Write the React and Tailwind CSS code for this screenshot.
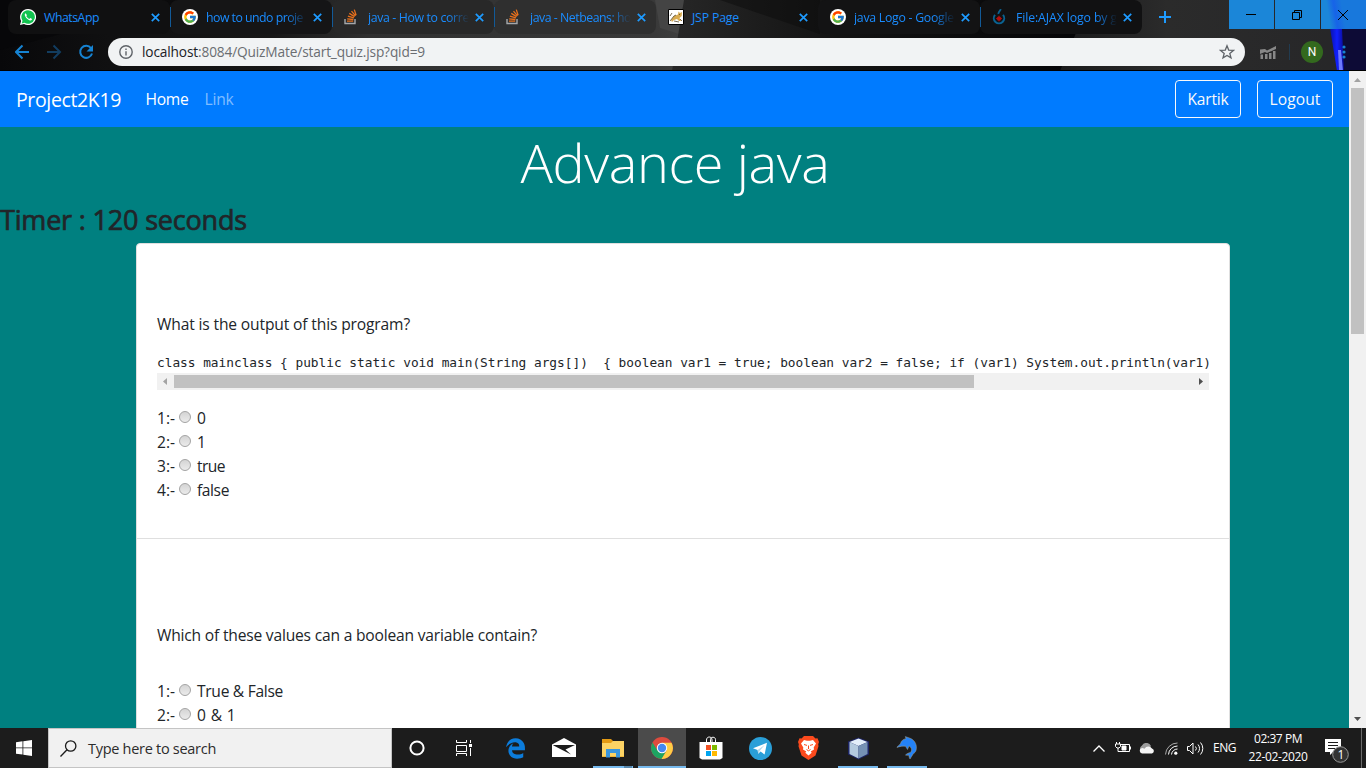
import React, { useLayoutEffect, useRef } from "react";
import { FcGoogle } from "react-icons/fc";
import { FaEdgeLegacy } from "react-icons/fa6";

/* Text run whose letter spacing is adjusted so that it spans `w` pixels. */
function Fit({ w, className = "", children }) {
  const ref = useRef(null);
  useLayoutEffect(() => {
    const el = ref.current;
    const fit = () => {
      el.style.letterSpacing = "0px";
      const n = el.textContent.length;
      el.style.letterSpacing = (w - el.getBoundingClientRect().width) / n + "px";
    };
    fit();
    document.fonts.ready.then(fit);
  }, [w]);
  return (
    <span ref={ref} className={"inline-block whitespace-pre " + className}>
      {children}
    </span>
  );
}

const Close = () => (
  <svg className="size-[9px]" viewBox="0 0 9 9" stroke="#1e9bff" strokeWidth="1.7">
    <path d="M.8.8l7.4 7.4M8.2.8L.8 8.2" />
  </svg>
);

const WhatsApp = () => (
  <svg viewBox="0 0 16 16" className="size-4">
    <path d="M8 0a8 8 0 1 1-4 14.9L0 16l1.1-4A8 8 0 0 1 8 0z" fill="#fff" />
    <path d="M8 1.2a6.8 6.8 0 1 1-3.5 12.6L1.7 14.4l.8-2.7A6.8 6.8 0 0 1 8 1.2z" fill="#12c350" />
    <path
      d="M5.6 4.2c-.9.5-1.1 1.7-.4 3 1 2 2.700 3.600 4.700 4.200 1.300.3 2-.4 2.200-1.400L10.300 9l-.9.9C8 9.400 6.900 8.300 6.300 7l.7-.8z"
      fill="#fff"
    />
  </svg>
);

const Google = () => (
  <span className="flex size-4 items-center justify-center rounded-full bg-white">
    <FcGoogle className="size-[14px]" />
  </span>
);

const Stack = () => (
  <svg viewBox="0 0 14 16" className="h-4 w-[14px]" fill="none">
    <path d="M1 10v4.500h10V10" stroke="#a5a7aa" strokeWidth="1.400" />
    <path
      d="M3 12.200h6.200M3.200 9.800l6.200.7M3.900 7.200l6 1.700M5.300 4.400l5.300 3.200M7.500 2.100l4 4.700M10.300.6l1.800 5.600"
      stroke="#e8701c"
      strokeWidth="1.300"
    />
  </svg>
);

const Tomcat = () => (
  <svg viewBox="0 0 16 16" className="size-4">
    <path d="M.5.500h15v15H.5z" fill="#fff" stroke="#000" />
    <path d="M3 11l3-4 4-1.500.500-3L12 4l2-1-.3 4-2.200 2 1.500 3h-2L9 10l-3 1-2 2z" fill="#d8ab50" />
    <path d="M2 7l2-3M2 12l4-5 2-1M6 12l5 1M12 10l2 2M11 5l1 1" stroke="#57482c" strokeWidth=".8" fill="none" />
  </svg>
);

const Commons = () => (
  <svg viewBox="0 0 14 16" className="h-4 w-[14px]" fill="none">
    <path d="M8.500 0c.5 2-2.500 2.500-2 5" stroke="#0a6291" strokeWidth="1.800" />
    <path d="M3 5.800a5.200 5.200 0 1 0 8 0" stroke="#0a6291" strokeWidth="2" />
    <circle cx="7" cy="9.600" r="2.200" fill="#b50d0d" />
    <path d="M4.200 9.600h5.600M7 6.800v5.600" stroke="#b50d0d" />
  </svg>
);

const tabs = [
  { icon: <WhatsApp />, title: "WhatsApp", w: 55, bg: "bg-[#101011]", line: true },
  { icon: <Google />, title: "how to undo proje", w: 97, bg: "bg-[#151516]", line: true, fade: true },
  { icon: <Stack />, title: "java - How to corre", w: 101, bg: "bg-[#282828]", line: true, fade: true },
  { icon: <Stack />, title: "java - Netbeans: ho", w: 101, bg: "bg-[#2f2f2f]", fade: true },
  { icon: <Tomcat />, title: "JSP Page", w: 47, bg: "" },
  { icon: <Google />, title: "java Logo - Google", w: 100, bg: "bg-[#131314]", line: true, fade: true },
  { icon: <Commons />, title: "File:AJAX logo by g", w: 101, bg: "bg-[#111112]", fade: true },
];

function Backdrop() {
  return (
    <svg className="absolute inset-0 h-[71px] w-[1366px]" viewBox="0 0 1366 71">
      <defs>
        <linearGradient id="top" x1="0" x2="1">
          <stop offset="0" stopColor="#08080a" />
          <stop offset=".08" stopColor="#101011" />
          <stop offset=".2" stopColor="#171717" />
          <stop offset=".27" stopColor="#303030" />
          <stop offset=".48" stopColor="#393939" />
          <stop offset=".5" stopColor="#3f3f3f" />
        </linearGradient>
        <linearGradient id="mid" x1="0" x2="1">
          <stop offset="0" stopColor="#272727" />
          <stop offset=".4" stopColor="#131313" />
          <stop offset="1" stopColor="#050507" />
        </linearGradient>
        <linearGradient id="right" x1="0" x2="1">
          <stop offset="0" stopColor="#1a1a1b" />
          <stop offset=".35" stopColor="#2b2b2b" />
          <stop offset="1" stopColor="#262628" />
        </linearGradient>
        <linearGradient id="glow" x1="0" x2="1">
          <stop offset="0" stopColor="#0a12a8" />
          <stop offset=".5" stopColor="#1020ff" />
          <stop offset="1" stopColor="#0a0a90" />
        </linearGradient>
      </defs>
      <path d="M0 0h1366v71H0z" fill="url(#top)" />
      <path d="M0 71V50L190 0H0z" fill="#060608" opacity=".6" />
      <path d="M655 0h30l-6 34-19-6z" fill="#444" />
      <path d="M684 0h400v71H672z" fill="url(#mid)" />
      <path d="M720 0h100v34z" fill="#0c0c0c" opacity=".5" />
      <path d="M1090 0h276v71H1060z" fill="url(#right)" />
      <path d="M1325 0h41v71h-24z" fill="#0d0b36" />
      <path d="M1330 28h12l2 43h-7z" fill="url(#glow)" />
      <path d="M1338 50l3 0 2 21h-4z" fill="#6d78ff" />
      <path d="M0 70h1366v1H0z" fill="#000" />
    </svg>
  );
}

function BrowserChrome() {
  return (
    <header className="relative h-[71px] shrink-0 overflow-hidden bg-[#101011]">
      <Backdrop />
      <div className="relative flex h-[34px]">
        <div className="flex pl-2">
          {tabs.map((t, i) => (
            <div key={i} className={"relative flex h-[34px] w-[162px] items-center rounded-lg pl-3 " + t.bg}>
              <span className="flex w-6 shrink-0 items-center">{t.icon}</span>
              <span
                className={
                  "w-[102px] pt-px text-[12.300px] leading-4 whitespace-nowrap text-[#1a8cff] " +
                  (t.fade ? "[mask-image:linear-gradient(to_right,black_78%,transparent_99%)]" : "")
                }
              >
                <Fit w={t.w}>{t.title}</Fit>
              </span>
              <span className="ml-[4.500px]">
                <Close />
              </span>
              {t.line && <span className="absolute top-[7px] -right-px z-10 h-5 w-px bg-[#125a98]" />}
            </div>
          ))}
        </div>
        <div className="flex w-[62px] items-center pl-[17px]">
          <svg className="size-3" viewBox="0 0 12 12" stroke="#1e9bff" strokeWidth="2">
            <path d="M6 0v12M0 6h12" />
          </svg>
        </div>
        <div className="ml-auto flex h-[29px] gap-px">
          <div className="flex w-[45px] items-center justify-center bg-[#1b86d8]">
            <svg className="mr-px h-2.5 w-2.5" viewBox="0 0 10 10" stroke="#000">
              <path d="M0 4.500h10" />
            </svg>
          </div>
          <div className="flex w-[45px] items-center justify-center bg-[#1b86d8]">
            <svg className="mr-px size-2.5" viewBox="0 0 10 10" stroke="#000" fill="none">
              <path d="M.5 2.500h7v7h-7zM2.500 2.500v-2h7v7h-2" />
            </svg>
          </div>
          <div className="flex w-[45px] items-center justify-center bg-[linear-gradient(80deg,#1b86d8_20%,#1763e8_34%,#1878dc_50%)]">
            <svg className="mr-px size-2.5" viewBox="0 0 10 10" stroke="#000" fill="none">
              <path d="M0 0l10 10M10 0L0 10" />
            </svg>
          </div>
        </div>
      </div>
      <div className="relative flex h-9 items-center">
        <svg className="ml-[15px] h-4 w-20 shrink-0" viewBox="0 0 80 16" fill="none" strokeWidth="2">
          <path d="M14 8H1.500M7.500 1.500L1 8l6.500 6.500" stroke="#1683d2" />
          <path d="M32 8h12.500M38.500 1.500L45 8l-6.500 6.500" stroke="#123d60" />
          <path d="M76 4.200A6 6 0 1 0 77 9.500" stroke="#1683d2" />
          <path d="M78 1v6.500h-6.500z" fill="#1683d2" />
        </svg>
        <div className="ml-[13px] flex h-7 w-[1137px] items-center rounded-full bg-[#f1f3f4] pr-[10px] pl-[11px]">
          <svg className="size-[14px]" viewBox="0 0 14 14" fill="none" stroke="#5f6368" strokeWidth="1.400">
            <circle cx="7" cy="7" r="6.200" />
            <path d="M7 6.200v4.300M7 3.400v1.500" />
          </svg>
          <span className="ml-[9px] text-[13.700px] leading-5 text-[#6a6d71]">
            <Fit w={283}>
              <span className="text-[#202124]">localhost</span>:8084/QuizMate/start_quiz.jsp?qid=9
            </Fit>
          </span>
          <svg className="ml-auto size-4" viewBox="0 0 16 16" fill="none" stroke="#5f6368" strokeWidth="1.300">
            <path d="M8 1.800l1.700 4.300 4.700.3-3.600 3 1.200 4.500L8 11.400l-4 2.500 1.200-4.500-3.600-3 4.700-.3z" />
          </svg>
        </div>
        <svg className="ml-[15px] h-[13px] w-4" viewBox="0 0 16 13">
          <path d="M0 3.500l5-.5 2 1.500L16 0v3L7 7 5 6 0 8z" fill="#888" />
          <path d="M.5 8.500h2.500V13H.5zM5 8h2.500v5H5zM9 7h2.500v6H9zM13 5h2.500v8H13z" fill="#888" />
        </svg>
        <span className="ml-[13px] h-4 w-px bg-[#213b50]" />
        <span className="ml-[11px] flex size-[22px] items-center justify-center rounded-full bg-[#33691e] font-['Roboto',sans-serif] text-[12px] text-white">
          N
        </span>
        <svg className="ml-[19px] h-[14px] w-1" viewBox="0 0 4 14" fill="#1683d2">
          <circle cx="2" cy="2" r="1.600" />
          <circle cx="2" cy="7" r="1.600" />
          <circle cx="2" cy="12" r="1.600" />
        </svg>
      </div>
    </header>
  );
}

function Radio() {
  return (
    <span className="mr-[6px] mb-[3px] ml-[4px] size-3 rounded-full border border-[#a3a3a3] bg-linear-to-b from-[#d4d4d4] to-[#ebebeb]" />
  );
}

function Options({ items }) {
  return (
    <div>
      {items.map((o, i) => (
        <div key={i} className="flex h-6 items-center">
          <Fit w={18} className="pt-[2px]">{i + 1 + ":-"}</Fit>
          <Radio />
          <Fit w={o[1]} className="pt-[2px]">{o[0]}</Fit>
        </div>
      ))}
    </div>
  );
}

function Page() {
  return (
    <main className="flex min-h-0 flex-1 overflow-hidden bg-[#008080] text-[15.600px] text-[#212529]">
      <div className="flex h-full w-[1349px] flex-col overflow-hidden">
        <nav className="flex h-14 shrink-0 items-center bg-[#007bff] px-4 text-white">
          <Fit w={105} className="pt-px text-[19.500px] leading-[30px]">Project2K19</Fit>
          <Fit w={43} className="ml-[24.500px] pt-[2px]">Home</Fit>
          <Fit w={29} className="ml-4 pt-[2px] text-white/50">Link</Fit>
          <button className="ml-auto flex h-[38px] w-[66px] items-center justify-center rounded border border-[#f8f9fa] text-[#f8f9fa]">
            <Fit w={41} className="pt-[2px]">Kartik</Fit>
          </button>
          <button className="ml-4 flex h-[38px] w-[76px] items-center justify-center rounded border border-[#f8f9fa] text-[#f8f9fa]">
            <Fit w={51} className="pt-[2px]">Logout</Fit>
          </button>
        </nav>
        <h1 className="mb-2 flex h-[67px] shrink-0 items-center justify-center pt-1 pl-px text-[54px] leading-[67px] font-light text-white">
          <Fit w={309}>Advance java</Fit>
        </h1>
        <h3 className="mb-[7px] h-[34px] shrink-0 text-[27px] leading-[36px] [-webkit-text-stroke:0.7px_#212529]">
          <Fit w={247}>Timer : 120 seconds</Fit>
        </h3>
        <div className="ml-[136px] w-[1094px] shrink-0 rounded-t border border-[#dfdfdf] bg-white">
          <section className="h-[295px] border-b border-[#dfdfdf] px-5 pt-[68px]">
            <p className="h-6 leading-6">
              <Fit w={253}>What is the output of this program?</Fit>
            </p>
            <pre className="mt-[17px] h-[20px] font-['DejaVu_Sans_Mono',monospace] text-[12.800px] leading-[20px]">
              <Fit w={1054}>
                {"class mainclass { public static void main(String args[])  { boolean var1 = true; boolean var2 = false; if (var1) System.out.println(var1)"}
              </Fit>
            </pre>
            <div className="flex h-[17px] items-center bg-[#f1f1f1]">
              <svg className="ml-1.5 h-[7px] w-1 shrink-0" viewBox="0 0 4 7">
                <path d="M4 0v7L0 3.500z" fill="#a3a3a3" />
              </svg>
              <span className="ml-[7px] h-[13px] w-[800px] bg-[#c1c1c1]" />
              <svg className="mr-1.5 ml-auto h-[7px] w-1 shrink-0" viewBox="0 0 4 7">
                <path d="M0 0v7l4-3.500z" fill="#505050" />
              </svg>
            </div>
            <div className="mt-4">
              <Options items={[["0", 9], ["1", 9], ["true", 28], ["false", 32]]} />
            </div>
          </section>
          <section className="h-[295px] px-5 pt-[84px]">
            <p className="h-6 leading-6">
              <Fit w={380}>Which of these values can a boolean variable contain?</Fit>
            </p>
            <div className="mt-8">
              <Options items={[["True & False", 86], ["0 & 1", 39]]} />
            </div>
          </section>
        </div>
      </div>
      <div className="flex w-[17px] flex-col items-center bg-[#f1f1f1]">
        <svg className="mt-[7px] h-1 w-[7px]" viewBox="0 0 7 4">
          <path d="M0 4h7L3.500 0z" fill="#a3a3a3" />
        </svg>
        <span className="mt-1.5 h-[246px] w-[13px] bg-[#c1c1c1]" />
        <svg className="mt-auto mb-[7px] h-1 w-[7px]" viewBox="0 0 7 4">
          <path d="M0 0h7L3.500 4z" fill="#505050" />
        </svg>
      </div>
    </main>
  );
}

const Cortana = () => (
  <svg className="mr-px size-4" viewBox="0 0 16 16">
    <circle cx="8" cy="8" r="6.600" fill="none" stroke="#fff" strokeWidth="2" />
  </svg>
);
const TaskView = () => (
  <svg className="mr-1 h-4 w-4" viewBox="0 0 16 16" fill="none" stroke="#fff">
    <path d="M.5 0v2.500h10V0M.5 5.500h10v6H.500zM.5 16v-2.500h10V16M14.500 0v3M14.500 8v8" />
    <path d="M13 4h3v3h-3z" fill="#fff" stroke="none" />
  </svg>
);
const Mail = () => (
  <svg className="h-5 w-6" viewBox="0 0 24 20">
    <path d="M0 6.500L12 0l12 6.500V19H0z" fill="#fff" />
    <path d="M1 7h22l-9.500 4.500 5.500 5L1.500 7.500z" fill="#1c1c1c" />
  </svg>
);
const Explorer = () => (
  <svg className="h-[19px] w-[22px]" viewBox="0 0 22 19">
    <path d="M0 0h9l2 2h11v16H0z" fill="#e39a14" />
    <path d="M0 4h9l2-2h11v15.500H0z" fill="#fcd364" />
    <path d="M4 10h14v8.500h-4V14H8v4.500H4z" fill="#3a96dd" />
  </svg>
);
const Chrome = () => (
  <svg className="size-[22px]" viewBox="0 0 22 22">
    <circle cx="11" cy="11" r="11" fill="#dd4b3e" />
    <path d="M1.500 5.500A11 11 0 0 0 11 22l4.500-8.500h-9z" fill="#1da462" />
    <path d="M20.500 5.700A11 11 0 0 1 10.500 22l5.200-8.500L11 5.700z" fill="#ffcd46" />
    <circle cx="11" cy="11" r="5.200" fill="#fff" />
    <circle cx="11" cy="11" r="4.200" fill="#4688f1" />
  </svg>
);
const Store = () => (
  <svg className="mr-px h-6 w-6" viewBox="0 0 24 24">
    <path d="M7.500 6V4c0-4 5.500-4 5.500 0v2M11.500 6V3.500c0-3 5-3 5 0V6" stroke="#fff" fill="none" />
    <path d="M.5 6h23v16L21 23.500H3L.5 22z" fill="#fff" />
    <path d="M7 9h5v5H7z" fill="#f25022" />
    <path d="M13 9h5v5h-5z" fill="#7fba00" />
    <path d="M7 15h5v5H7z" fill="#00a4ef" />
    <path d="M13 15h5v5h-5z" fill="#ffb900" />
  </svg>
);
const Telegram = () => (
  <svg className="size-[23px]" viewBox="0 0 23 23">
    <circle cx="11.500" cy="11.500" r="11.500" fill="#2a9fd8" />
    <path d="M4 11.300L18 5.800l-2.400 11.700-4.100-2.900-2.200 2.200-.7-3.800z" fill="#fff" />
    <path d="M8.600 13l7-5-4.800 5.800-1.500 3z" fill="#b5d9ec" />
  </svg>
);
const Brave = () => (
  <svg className="mr-px h-6 w-[21px]" viewBox="0 0 21 24">
    <path d="M6 0h9l2.500 2.500 2-.2L21 6l-.8 2.200.3 2-3 9.300-7 4.500-7-4.500-3-9.300.3-2L0 6l1.500-3.700 2 .2z" fill="#fb4a1d" />
    <path
      d="M6 4l3 .8h3L15 4l3 3.500-2.300 4 .3 2-3.300 2 1 1.200-3.200 2.800-3.200-2.800 1-1.200-3.300-2 .3-2L3 7.500z"
      fill="#fff"
    />
    <path d="M6 8.500l3 .9M15 8.500l-3 .9M10.500 9.500v3.500M8.500 13.500l2 1.300 2-1.300" stroke="#fb4a1d" fill="none" strokeWidth="1" />
  </svg>
);
const Cube = () => (
  <svg className="size-[23px]" viewBox="0 0 23 23">
    <path d="M11.500.500L22 4.500v13l-10.500 5L1 17.500v-13z" fill="#1d2464" />
    <path d="M11.500 1.500l9 3.500-9 4-9-4z" fill="#e3eefa" />
    <path d="M2.500 5l9 4v12.500l-9-4.500z" fill="#b4cadf" />
    <path d="M20.500 5l-9 4v12.500l9-4.500z" fill="#7591b4" />
  </svg>
);
const Dolphin = () => (
  <svg className="h-6 w-[22px]" viewBox="0 0 22 24">
    <path
      d="M1 11.500c.5-1.800 3-2.500 3.500-4C5.300 4.500 7.500 3 10 2.700L9.300.600 14 2.200c5 1.800 7.500 7.300 6 12.300-.4 1.400-1.500 2.500-2.800 3.300-.8 1.700-2 3-3.200 5.200-.8-1.500-1.200-2.500-1-3.800-1.300.2-2.200.2-3.500-.2 1.500-1.600 3.500-2.200 5-2.600C16.500 14 15.500 11.500 13 10l-1.500 3.500L9.500 10.300C6.500 9.800 3.500 10.500 1 11.500z"
      fill="#2382f7"
      stroke="#a7a08a"
      strokeWidth=".5"
    />
  </svg>
);

const apps = [
  { icon: <Cortana /> },
  { icon: <TaskView /> },
  { icon: <FaEdgeLegacy className="size-[21px] text-[#0c7cdb]" /> },
  { icon: <Mail /> },
  { icon: <Explorer />, bar: "w-10" },
  { icon: <Chrome />, bar: "w-12", active: true },
  { icon: <Store /> },
  { icon: <Telegram /> },
  { icon: <Brave /> },
  { icon: <Cube />, bar: "w-10" },
  { icon: <Dolphin />, bar: "w-10" },
];

function Taskbar() {
  return (
    <footer className="flex h-10 shrink-0 bg-[#1c1c1c] text-white">
      <div className="flex w-12 items-center justify-center">
        <svg className="size-4" viewBox="0 0 16 16" fill="#fff">
          <path d="M0 2.200l6.500-.9v6.200H0zM7.300 1.200L16 0v7.500H7.300zM0 8.300h6.500v6.300L0 13.700zM7.300 8.300H16V16l-8.700-1.300z" />
        </svg>
      </div>
      <div className="mr-px flex w-[344px] items-center border border-[#c4c4c4] bg-[#f1f1f1] pl-[11px] text-[#2c2c2c]">
        <svg className="size-[17px]" viewBox="0 0 17 17" fill="none" stroke="#1b1b1b" strokeWidth="1.300">
          <circle cx="10.700" cy="6" r="5.200" />
          <path d="M7 9.700L.5 16.500" />
        </svg>
        <span className="ml-[11px] pt-px text-[14.500px] leading-5">
          <Fit w={128}>Type here to search</Fit>
        </span>
      </div>
      {apps.map((a, i) => (
        <div key={i} className="flex w-[49px] shrink-0">
          <div className={"relative flex w-12 items-center justify-center " + (a.active ? "bg-[#4b4b4b]" : "")}>
            {a.icon}
            {a.bar && <span className={"absolute bottom-0 h-0.5 bg-[#76b9ed] " + a.bar} />}
            {i === 4 && <span className="absolute right-[5px] bottom-0 h-0.5 w-2 bg-[#5787ac]" />}
          </div>
        </div>
      ))}
      <div className="ml-auto flex items-center">
        <svg className="h-[7px] w-3" viewBox="0 0 12 7" fill="none" stroke="#fff" strokeWidth="1.300">
          <path d="M.5 6.500L6 1l5.500 5.500" />
        </svg>
        <svg className="ml-[10px] h-3 w-4" viewBox="0 0 16 12" fill="none" stroke="#fff">
          <path d="M6 2.500h8.500v7h-9M15.500 4.500v3M1.500 0v2M4.500 0v2M3 6v3.500h3" />
          <path d="M.5 2h5v2.500L4 6H2L.5 4.500z" />
          <path d="M7 4h4v4H7z" fill="#fff" />
        </svg>
        <svg className="ml-2 h-[11px] w-4" viewBox="0 0 16 11">
          <path d="M1 7a4.500 4.500 0 0 1 2-4.500A5 5 0 0 1 12 3l-3 4z" fill="#9c9c9c" />
          <path d="M3 10.500a2.800 2.800 0 0 1 0-5.500c1 0 1.800.2 2.500.7A4.500 4.500 0 0 1 13 5.500a2.600 2.600 0 0 1 0 5z" fill="#f4f4f4" />
        </svg>
        <svg className="ml-[10px] size-[13px]" viewBox="0 0 13 13" fill="none" stroke="#fff">
          <path d="M.5 12.500A12 12 0 0 1 12.500 1" stroke="#aaa" />
          <path d="M3.500 12.500a9 9 0 0 1 9-8.500M6.500 12.500a6 6 0 0 1 6-5.500" />
          <circle cx="10.800" cy="11.200" r="1.600" fill="#fff" stroke="none" />
        </svg>
        <svg className="ml-[9px] h-[13px] w-[17px]" viewBox="0 0 17 13" fill="none" stroke="#fff">
          <path d="M.5 4.500h2L6 1v11L2.500 8.500h-2zM8.500 4.500a3 3 0 0 1 0 4M11 2.500a6 6 0 0 1 0 8M13.500.500a9 9 0 0 1 0 12" />
        </svg>
        <Fit w={23} className="ml-[9px] text-[12px]">ENG</Fit>
        <div className="ml-[12px] flex w-[60px] flex-col items-center text-[12px] leading-[18px]">
          <Fit w={48}>02:37 PM</Fit>
          <Fit w={59}>22-02-2020</Fit>
        </div>
        <div className="relative ml-[17px] h-6 w-6 translate-y-[3px]">
          <svg className="size-6" viewBox="0 0 24 24">
            <path d="M0 0h16v13H8l-3 3v-3H0z" fill="#fff" />
            <path d="M3 3.500h10M3 6.500h10M3 9.500h7" stroke="#1c1c1c" />
            <circle cx="15.500" cy="15.500" r="7.800" fill="#333" stroke="#999" />
          </svg>
          <span className="absolute top-[8px] left-[12.500px] text-[12px] leading-[15px]">1</span>
        </div>
        <span className="ml-3 h-10 w-px bg-[#6a6a6a]" />
        <span className="w-1" />
      </div>
    </footer>
  );
}

export default function App() {
  return (
    <div className="flex h-[768px] w-[1366px] flex-col overflow-hidden font-['Open_Sans','Noto_Sans',sans-serif]">
      <BrowserChrome />
      <Page />
      <Taskbar />
    </div>
  );
}
